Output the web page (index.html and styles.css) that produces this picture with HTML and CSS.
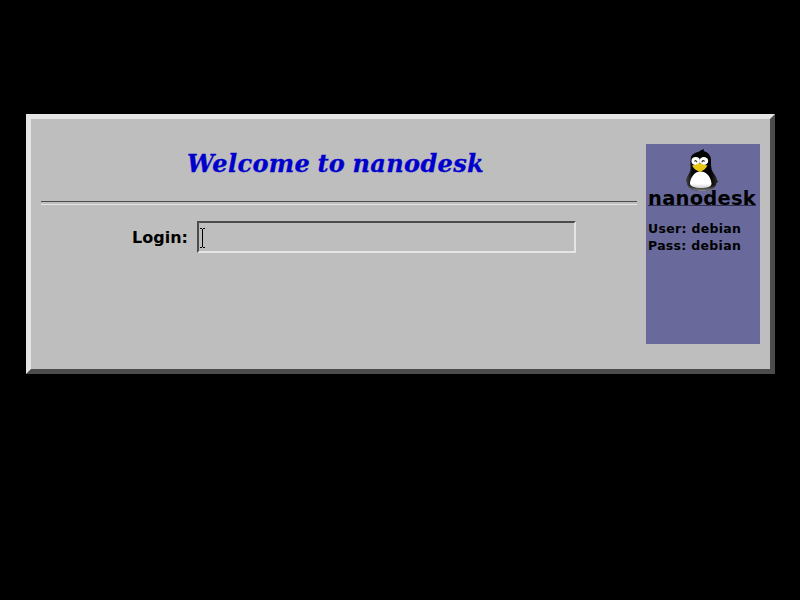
FILE: index.html
```html
<!DOCTYPE html>
<html lang="en">
<head>
<meta charset="utf-8">
<title>nanodesk login</title>
<link rel="stylesheet" href="styles.css">
</head>
<body>
<main class="panel">
  <form class="login">
    <h1 class="welcome">Welcome to nanodesk</h1>
    <div class="rule"></div>
    <div class="row">
      <label class="label">Login:</label>
      <div class="field">
        <svg class="caret" width="5" height="20" viewBox="0 0 5 20" shape-rendering="crispEdges"><path d="M0 0h2v1h1V0h2v1H3v18h2v1H3v-1H2v1H0v-1h2V1H0z" fill="#000"/></svg>
      </div>
    </div>
  </form>
  <aside class="side">
    <svg class="tux" width="34" height="44" viewBox="0 0 34 44">
      <defs>
        <linearGradient id="body" x1="0" x2="1"><stop offset="0" stop-color="#444"/><stop offset=".2" stop-color="#050505"/><stop offset=".75" stop-color="#000"/><stop offset="1" stop-color="#333"/></linearGradient>
        <linearGradient id="belly" x1="0" y1="0" x2="0" y2="1"><stop offset=".75" stop-color="#fff"/><stop offset="1" stop-color="#ccc"/></linearGradient>
        <linearGradient id="feet" x1="0" y1="0" x2="0" y2="1"><stop offset=".85" stop-color="#888" stop-opacity="0"/><stop offset="1" stop-color="#888"/></linearGradient>
      </defs>
      <path d="M15.500 1.500L19 0l-.3 2C24 3.500 26 7 26 11.500c0 6 0 9.500 3.500 14 2 3 2.500 4 2.500 6l1.500 1-2 1.500c-.5 2-1 3-2 4C27 40.500 23 42 17 42 9 42 4 39.500 2.500 36.500L1 31l1.500-4c1-2 3-4 3-7.500 0-3-.5-7 .5-12C7 5 10 4 12.500 3c2-.5 2-.8 3-1.500z" fill="url(#body)"/>
      <path d="M2.500 36.500C4 39.500 9 42 17 42S27 40.500 29 38l1-4V2H3z" fill="url(#feet)"/>
      <path d="M5 34c.5-5 4-11.500 10.500-11.500s10.500 6 11 12c0 3.500-4.500 4.500-10.500 4.500S4.500 37.500 5 34z" fill="url(#belly)"/>
      <ellipse cx="10.700" cy="12" rx="4.200" ry="4" fill="#fff"/>
      <ellipse cx="18.800" cy="12" rx="4.400" ry="4" fill="#fff"/>
      <path d="M9.500 12.500q1.500-2 2.500.8M16.800 13.300q1.300-2.800 2.800-.8" fill="none" stroke="#333" stroke-width="1.200"/>
      <path d="M7 16.500q4.500-.7 6.500-2 1.200-.7 2.500 0 2 1.300 6.500 2-2.500 4.500-7.500 6.500-5.500-2-8-6.500z" fill="#e8c814"/>
    </svg>
    <div class="brand">nanodesk</div>
    <div class="hint">User: debian</div>
    <div class="hint">Pass: debian</div>
  </aside>
</main>
</body>
</html>
```
FILE: styles.css
```css
* { box-sizing: border-box; }
body {
  margin: 0;
  height: 600px;
  padding: 114px 25px 0 26px;
  background: #000;
  color: #000;
  font-family: "DejaVu Sans", sans-serif;
  font-weight: bold;
  overflow: hidden;
}
.panel {
  display: flex;
  gap: 9px;
  height: 260px;
  padding: 25px 10px 0;
  border: 5px solid;
  border-color: #e5e5e5 #4c4c4c #4c4c4c #e5e5e5;
  background: #bebebe;
}
.login { width: 596px; }
.welcome {
  margin: 0 0 0 146px;
  height: 57px;
  font: italic bold 24px/40px "DejaVu Serif", serif;
  letter-spacing: 0.35px;
  word-spacing: -1.4px;
  color: #0000cd;
  -webkit-text-stroke: 0.3px #0000cd;
  white-space: nowrap;
}
.rule {
  height: 4px;
  border-top: 1px solid #4c4c4c;
  border-bottom: 1px solid #e5e5e5;
}
.row { display: flex; margin: 16px 0 0 91px; }
.label { width: 65px; font-size: 16px; line-height: 34px; height: 32px; }
.field {
  width: 379px;
  height: 32px;
  padding: 5px 0 0 1px;
  border: 2px solid;
  border-color: #4c4c4c #e5e5e5 #e5e5e5 #4c4c4c;
}
.caret, .tux { display: block; }
.side {
  width: 114px;
  height: 200px;
  padding: 5px 2px 0;
  background: #69699b;
  white-space: nowrap;
}
.tux { margin-left: 37px; overflow: visible; }
.brand {
  height: 17px;
  margin: -4px 0 14px;
  width: 108px;
  border-bottom: 1px solid #303050;
  font-size: 19.5px;
  line-height: 20px;
  letter-spacing: 0.25px;
}
.hint {
  height: 17px;
  font-size: 12.5px;
  line-height: 17px;
  letter-spacing: 0.3px;
}
```
